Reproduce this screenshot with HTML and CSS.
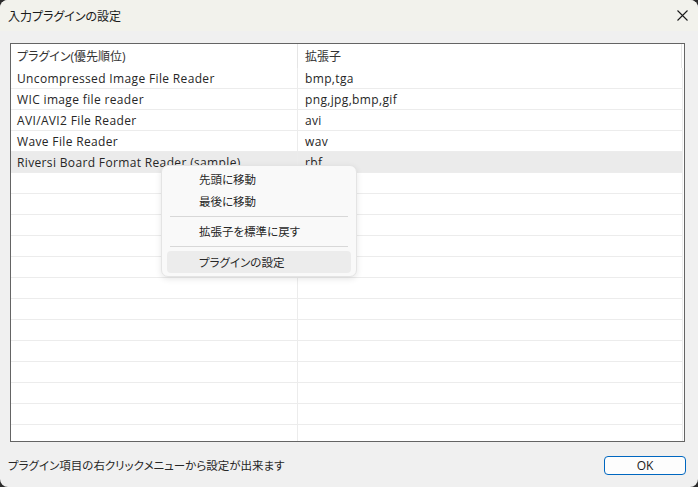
FILE: index.html
```html
<!DOCTYPE html>
<html lang="ja">
<head>
<meta charset="utf-8">
<title>入力プラグインの設定</title>
<link rel="stylesheet" href="styles.css">
</head>
<body>
<div class="window">
  <div class="titlebar">
    <span class="title">入力プラグインの設定</span>
    <svg class="close" width="11" height="11" viewBox="0 0 11 11"><path d="M0.5 0.5 L10.5 10.5 M10.5 0.5 L0.5 10.5" stroke="#1a1a1a" stroke-width="1.1" fill="none"/></svg>
  </div>
  <div class="content">
    <div class="list">
      <div class="header">
        <div class="hcell c1">プラグイン(優先順位)</div>
        <div class="hcell c2">拡張子</div>
      </div>
      <div class="rows">
        <div class="row"><div class="cell c1">Uncompressed Image File Reader</div><div class="cell c2">bmp,tga</div></div>
        <div class="row"><div class="cell c1">WIC image file reader</div><div class="cell c2">png,jpg,bmp,gif</div></div>
        <div class="row"><div class="cell c1">AVI/AVI2 File Reader</div><div class="cell c2">avi</div></div>
        <div class="row"><div class="cell c1">Wave File Reader</div><div class="cell c2">wav</div></div>
        <div class="row selected"><div class="cell c1">Riversi Board Format Reader (sample)</div><div class="cell c2">rbf</div></div>
        <div class="row"><div class="cell c1"></div><div class="cell c2"></div></div>
        <div class="row"><div class="cell c1"></div><div class="cell c2"></div></div>
        <div class="row"><div class="cell c1"></div><div class="cell c2"></div></div>
        <div class="row"><div class="cell c1"></div><div class="cell c2"></div></div>
        <div class="row"><div class="cell c1"></div><div class="cell c2"></div></div>
        <div class="row"><div class="cell c1"></div><div class="cell c2"></div></div>
        <div class="row"><div class="cell c1"></div><div class="cell c2"></div></div>
        <div class="row"><div class="cell c1"></div><div class="cell c2"></div></div>
        <div class="row"><div class="cell c1"></div><div class="cell c2"></div></div>
        <div class="row"><div class="cell c1"></div><div class="cell c2"></div></div>
        <div class="row"><div class="cell c1"></div><div class="cell c2"></div></div>
        <div class="row"><div class="cell c1"></div><div class="cell c2"></div></div>
        <div class="row"><div class="cell c1"></div><div class="cell c2"></div></div>
      </div>
    </div>
    <div class="footer">
      <span class="hint">プラグイン項目の右クリックメニューから設定が出来ます</span>
      <button class="ok">OK</button>
    </div>
  </div>
  <div class="menu">
    <div class="item">先頭に移動</div>
    <div class="item">最後に移動</div>
    <div class="sep"></div>
    <div class="item">拡張子を標準に戻す</div>
    <div class="sep"></div>
    <div class="item hover">プラグインの設定</div>
  </div>
</div>
</body>
</html>
```

FILE: styles.css
```css
* { box-sizing: border-box; }
html, body {
  margin: 0;
  padding: 0;
  width: 698px;
  height: 487px;
  background: #2c2c2c;
  overflow: hidden;
}
.window {
  position: relative;
  width: 698px;
  height: 487px;
  background: #f0f0f0;
  border-radius: 8px;
  overflow: hidden;
  display: flex;
  flex-direction: column;
  font-family: "Open Sans", "Noto Sans CJK JP", sans-serif;
  font-feature-settings: "palt";
  font-size: 12px;
  color: #1c1c1c;
}
.titlebar {
  height: 31px;
  flex: none;
  background: #f2f2ec;
  display: flex;
  align-items: center;
  justify-content: space-between;
  padding: 0 10px 0 8px;
}
.title {
  font-size: 12px;
  color: #1a1a1a;
}
.close { display: block; margin-top: -1px; }
.content {
  flex: 1;
  display: flex;
  flex-direction: column;
  padding: 12px 13px 0 10px;
}
.list {
  height: 399px;
  flex: none;
  border: 1px solid #646464;
  background: #fff;
  overflow: hidden;
}
.header {
  display: grid;
  grid-template-columns: 287px 384px;
  height: 24px;
}
.hcell {
  display: flex;
  align-items: center;
  color: #333;
}
.hcell.c1 { padding-left: 6px; border-right: 1px solid #e5e5e5; }
.hcell.c2 { padding-left: 7px; border-right: 1px solid #e5e5e5; }
.row {
  display: grid;
  grid-template-columns: 287px 385px;
  height: 21px;
  border-bottom: 1px solid #ececec;
  width: 672px;
}
.row.selected { background: #ebebeb; }
.cell {
  display: flex;
  align-items: center;
  white-space: nowrap;
  overflow: hidden;
  color: #262626;
  letter-spacing: 0.35px;
}
.cell.c1 { padding-left: 6px; border-right: 1px solid #ececec; }
.cell.c2 { padding-left: 7px; border-right: 1px solid #ececec; }
.footer {
  flex: 1;
  display: flex;
  justify-content: space-between;
  align-items: flex-start;
  padding-top: 14px;
}
.hint {
  margin-left: -2px;
  margin-top: 1px;
  font-size: 11.5px;
  color: #262626;
}
.ok {
  width: 82px;
  height: 19px;
  margin-right: -1px;
  border: 1px solid #0067c0;
  border-radius: 4px;
  background: #fdfdfd;
  font-family: "Open Sans", "Noto Sans CJK JP", sans-serif;
  font-size: 12px;
  color: #1a1a1a;
  padding: 0;
  line-height: 17px;
}
.menu {
  position: absolute;
  left: 161px;
  top: 165px;
  width: 196px;
  padding: 2px 5px 3px;
  background: #f9f9f9;
  border: 1px solid #e4e4e4;
  border-radius: 7px;
  box-shadow: 0 2px 6px rgba(0,0,0,0.1);
  display: flex;
  flex-direction: column;
}
.item {
  height: 22px;
  display: flex;
  align-items: center;
  padding-left: 32px;
  padding-bottom: 1px;
  border-radius: 4px;
  font-size: 11.5px;
  color: #262626;
}
.item.hover { background: #ececec; margin-top: 1px; }
.sep {
  height: 8px;
  margin: 0 3px;
  display: flex;
  align-items: center;
}
.sep::before {
  content: "";
  display: block;
  width: 100%;
  height: 1px;
  background: #d8d8d8;
}
```
